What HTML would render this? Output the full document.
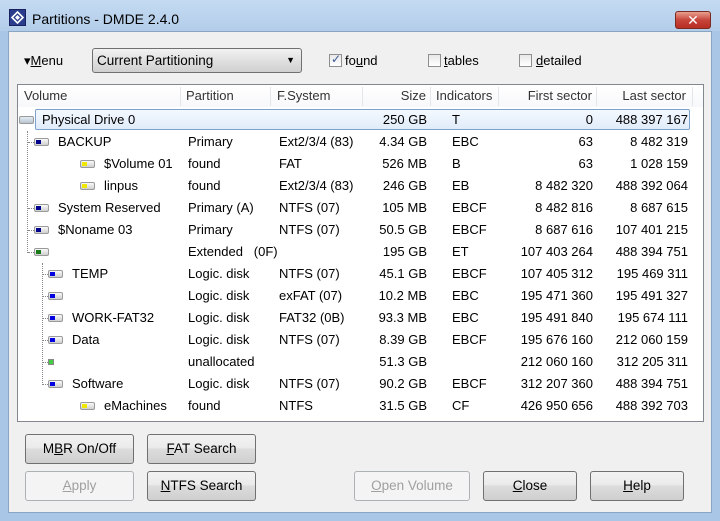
<!DOCTYPE html><html><head><style>
*{margin:0;padding:0;box-sizing:border-box}
body{width:720px;height:521px;position:relative;overflow:hidden;background:#a9c6e6;font-family:"Liberation Sans","DejaVu Sans",sans-serif;font-size:13px;color:#000}
.a{position:absolute;white-space:nowrap}
.client{position:absolute;left:8px;top:31px;width:704px;height:482px;background:#f0f0f0;border:1px solid #8aa4c4}
.title{background:linear-gradient(#c4daf2,#b3cde9)}
.btn{position:absolute;height:30px;border:1px solid #707070;border-radius:3px;background:linear-gradient(#f2f2f2 0%,#ebebeb 45%,#dddddd 50%,#cfcfcf 100%);text-align:center;line-height:28px;font-size:13.5px}
.dis{border-color:#adb2b5;background:#f4f4f4;color:#a0a0a0}
.list{position:absolute;left:17px;top:84px;width:687px;height:338px;background:#fff;border:1px solid #828790}
.hdr{position:absolute;top:85px;height:22px;line-height:22px;font-size:13px;color:#333}
.hd{position:absolute;top:87px;width:1px;height:19px;background:#e3e6ea}
.r{position:absolute;height:22px;line-height:22px;font-size:13px}
.ic{position:absolute;width:15px;height:8px;border:1px solid #9a9a9a;border-radius:2px;background:linear-gradient(#fafafa,#cfcfcf)}
.ic i{position:absolute;left:1px;top:1px;width:5px;height:4px}
.cb{position:absolute;width:13px;height:13px;border:1px solid #8f8f8f;background:linear-gradient(#e8e8e8,#fff)}
u{text-decoration:underline}
</style></head><body>
<div class="a title" style="left:0;top:0;width:720px;height:31px"></div>
<div class="a" style="left:9px;top:9px;width:17px;height:17px;background:#2a3d8c;border:1px solid #1a2060"><svg width="15" height="15"><path d="M7.5 2 L13 7.5 L7.5 13 L2 7.5Z" fill="none" stroke="#fff" stroke-width="1.6"/><path d="M7.5 5 L10 7.5 L7.5 10 L5 7.5Z" fill="#fff"/></svg></div>
<div class="a" style="left:32px;top:11px;font-size:14px">Partitions - DMDE 2.4.0</div>
<div class="a" style="left:675px;top:11px;width:36px;height:18px;border:1px solid #7a2a20;border-radius:3px;background:linear-gradient(#e8a090,#c7453a 50%,#b82e22);color:#fff;text-align:center;font-weight:bold;line-height:16px;font-size:14px">✕</div>
<div class="client"></div>
<div class="a" style="left:24px;top:53px">▾<u>M</u>enu</div>
<div class="a" style="left:92px;top:48px;width:210px;height:25px;border:1px solid #707070;border-radius:3px;background:linear-gradient(#f2f2f2,#e0e0e0 50%,#d0d0d0);line-height:23px;padding-left:4px;font-size:13.5px">Current Partitioning<span style="position:absolute;right:6px;font-size:9px">▼</span></div>
<div class="cb" style="left:329px;top:54px"><span style="position:absolute;left:1px;top:-3px;color:#3b5a99;font-size:12px">✓</span></div><div class="a" style="left:345px;top:53px">fo<u>u</u>nd</div>
<div class="cb" style="left:428px;top:54px"></div><div class="a" style="left:444px;top:53px"><u>t</u>ables</div>
<div class="cb" style="left:519px;top:54px"></div><div class="a" style="left:536px;top:53px"><u>d</u>etailed</div>
<div class="list"></div>
<div class="a" style="left:18px;top:85px;width:685px;height:22px;background:linear-gradient(#fff,#f7f8fa)"></div>
<div class="hdr" style="left:24px">Volume</div><div class="hd" style="left:180px"></div>
<div class="hdr" style="left:186px">Partition</div><div class="hd" style="left:270px"></div>
<div class="hdr" style="left:277px">F.System</div><div class="hd" style="left:362px"></div>
<div class="hdr" style="left:362px;width:64px;text-align:right">Size</div><div class="hd" style="left:430px"></div>
<div class="hdr" style="left:436px">Indicators</div><div class="hd" style="left:498px"></div>
<div class="hdr" style="left:498px;width:94px;text-align:right">First sector</div><div class="hd" style="left:596px"></div>
<div class="hdr" style="left:596px;width:90px;text-align:right">Last sector</div><div class="hd" style="left:692px"></div>
<div class="a" style="left:35px;top:109px;width:655px;height:21px;border:1px solid #7da2ce;border-radius:2px;background:linear-gradient(#f4f9ff,#e0ecfa)"></div>
<div class="a" style="left:27px;top:131px;width:0;height:122px;border-left:1px dotted #888"></div>
<div class="a" style="left:42px;top:263px;width:0;height:122px;border-left:1px dotted #888"></div>
<div id="rows"></div>
<script>
var R=[
[0,"Physical Drive 0","","","250 GB","T","0","488 397 167","g"],
[1,"BACKUP","Primary","Ext2/3/4 (83)","4.34 GB","EBC","63","8 482 319","#00008b"],
[3,"$Volume 01","found","FAT","526 MB","B","63","1 028 159","#f0e800"],
[3,"linpus","found","Ext2/3/4 (83)","246 GB","EB","8 482 320","488 392 064","#f0e800"],
[1,"System Reserved","Primary (A)","NTFS (07)","105 MB","EBCF","8 482 816","8 687 615","#00008b"],
[1,"$Noname 03","Primary","NTFS (07)","50.5 GB","EBCF","8 687 616","107 401 215","#00008b"],
[1,"","Extended &nbsp;&nbsp;(0F)","","195 GB","ET","107 403 264","488 394 751","#1a7a1a"],
[2,"TEMP","Logic. disk","NTFS (07)","45.1 GB","EBCF","107 405 312","195 469 311","#0000e0"],
[2,"","Logic. disk","exFAT (07)","10.2 MB","EBC","195 471 360","195 491 327","#0000e0"],
[2,"WORK-FAT32","Logic. disk","FAT32 (0B)","93.3 MB","EBC","195 491 840","195 674 111","#0000e0"],
[2,"Data","Logic. disk","NTFS (07)","8.39 GB","EBCF","195 676 160","212 060 159","#0000e0"],
[2,"","unallocated","","51.3 GB","","212 060 160","312 205 311","u"],
[2,"Software","Logic. disk","NTFS (07)","90.2 GB","EBCF","312 207 360","488 394 751","#0000e0"],
[3,"eMachines","found","NTFS","31.5 GB","CF","426 950 656","488 392 703","#f0e800"]];
var h="";
R.forEach(function(r,i){var y=109+i*22,ix,tx;
if(r[0]==0){ix=19;tx=42}else if(r[0]==1){ix=34;tx=58}else if(r[0]==2){ix=48;tx=72}else{ix=80;tx=104}
if(r[0]==1)h+='<div class="a" style="left:28px;top:'+(y+11)+'px;width:6px;border-top:1px dotted #888"></div>';
if(r[0]==2)h+='<div class="a" style="left:43px;top:'+(y+11)+'px;width:5px;border-top:1px dotted #888"></div>';
if(r[8]=="g")h+='<div class="ic" style="left:'+ix+'px;top:'+(y+7)+'px;background:linear-gradient(#e4ecf4,#b8c4d0)"></div>';
else if(r[8]=="u")h+='<div class="a" style="left:'+ix+'px;top:'+(y+8)+'px;width:6px;height:6px;border:1px solid #888;background:#4c4"></div>';
else h+='<div class="ic" style="left:'+ix+'px;top:'+(y+7)+'px"><i style="background:'+r[8]+'"></i></div>';
h+='<div class="r" style="left:'+tx+'px;top:'+y+'px">'+r[1]+'</div>';
h+='<div class="r" style="left:188px;top:'+y+'px">'+r[2]+'</div>';
h+='<div class="r" style="left:279px;top:'+y+'px">'+r[3]+'</div>';
h+='<div class="r" style="left:340px;width:87px;text-align:right;top:'+y+'px">'+r[4]+'</div>';
h+='<div class="r" style="left:452px;top:'+y+'px">'+r[5]+'</div>';
h+='<div class="r" style="left:490px;width:103px;text-align:right;top:'+y+'px">'+r[6]+'</div>';
h+='<div class="r" style="left:590px;width:98px;text-align:right;top:'+y+'px">'+r[7]+'</div>';});
document.getElementById("rows").innerHTML=h;
</script>
<div class="btn" style="left:25px;top:434px;width:109px">M<u>B</u>R On/Off</div>
<div class="btn" style="left:147px;top:434px;width:109px"><u>F</u>AT Search</div>
<div class="btn dis" style="left:25px;top:471px;width:109px"><u>A</u>pply</div>
<div class="btn" style="left:147px;top:471px;width:109px"><u>N</u>TFS Search</div>
<div class="btn dis" style="left:354px;top:471px;width:116px"><u>O</u>pen Volume</div>
<div class="btn" style="left:483px;top:471px;width:94px"><u>C</u>lose</div>
<div class="btn" style="left:590px;top:471px;width:94px"><u>H</u>elp</div>
</body></html>
